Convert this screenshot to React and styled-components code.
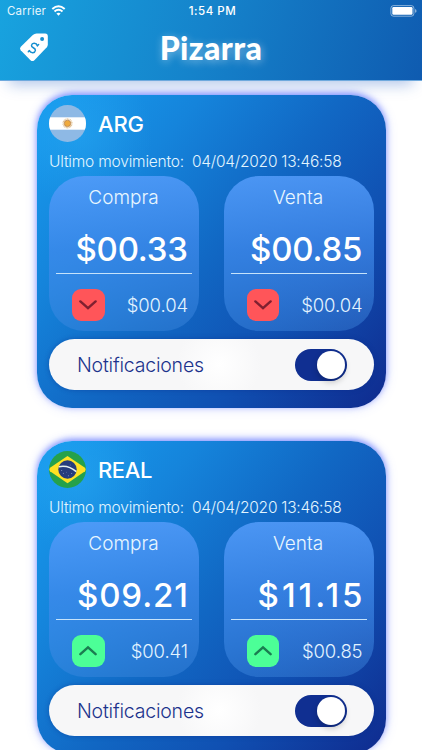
import styled, { createGlobalStyle } from "styled-components";
import { useState } from "react";

const GlobalStyle = createGlobalStyle`
    * {
        box-sizing: border-box;
    }

    body {
        margin: 0;
        background: white;
        font-family: "Inter", "Liberation Sans", sans-serif;
    }
`;

const Screen = styled.div`
    width: 422px;
    height: 750px;
    overflow: hidden;
    display: flex;
    flex-direction: column;
    background: white;
`;

const Header = styled.header`
    flex: none;
    height: 80px;
    display: flex;
    flex-direction: column;
    background: linear-gradient(108deg, #18a3df 0%, #1583cb 48%, #0f5bb0 100%);
    box-shadow: 0 1px 0 #6fa9dd, 0 13px 14px -9px rgba(25, 85, 190, 0.36);
    color: white;
`;

const StatusBar = styled.div`
    height: 21px;
    display: grid;
    grid-template-columns: 1fr auto 1fr;
    align-items: center;
    padding: 0 5px 0 7px;
`;

const Carrier = styled.div`
    display: flex;
    align-items: center;
    gap: 5px;
    font-size: 11.5px;
    letter-spacing: 0.2px;
    color: #e6f6fd;
`;

const Clock = styled.div`
    font-size: 11.5px;
    font-weight: 500;
    letter-spacing: 0.5px;
    padding: 1px 0 0 1px;
`;

const BatterySlot = styled.div`
    display: flex;
    justify-content: flex-end;
`;

const NavBar = styled.div`
    flex: 1;
    display: grid;
    grid-template-columns: 68px 1fr 68px;
    align-items: center;
    padding-bottom: 2px;
`;

const TagSlot = styled.div`
    display: flex;
    padding: 0 0 5px 19px;
`;

const PageTitle = styled.h1`
    margin: 0;
    padding-bottom: 3px;
    text-align: center;
    font-family: "Lato", sans-serif;
    font-size: 32px;
    line-height: 40px;
    font-weight: 900;
    letter-spacing: 0.4px;
    text-shadow: 1px 2px 8px rgba(255, 255, 255, 0.45);
`;

const List = styled.main`
    display: flex;
    flex-direction: column;
    gap: 33px;
    padding: 15px 36.5px 0 37px;
`;

const Card = styled.section`
    flex: none;
    height: 313px;
    padding: 10px 12px 18px;
    border-radius: 35px;
    background:
        radial-gradient(circle at 44px 40px, rgba(50, 180, 248, 0.32), rgba(50, 180, 248, 0) 72px),
        linear-gradient(130deg, #1799ec 5%, #1584db 27%, #1168c4 50%, #1050b2 72%, #0f2a8e 100%);
    box-shadow: 0 -2px 6px rgba(75, 100, 255, 0.65), 0 0 12px rgba(90, 110, 255, 0.25);
    color: white;
`;

const CardHead = styled.div`
    height: 37px;
    display: flex;
    align-items: center;
    gap: 12px;
`;

const Currency = styled.h2`
    margin: 0;
    font-size: 22px;
    line-height: 26px;
    font-weight: 500;
    letter-spacing: ${(props) => props.$spacing}px;
`;

const Movement = styled.div`
    height: 34px;
    padding-top: 4px;
    display: flex;
    align-items: center;
    gap: 8px;
    font-size: 15.5px;
    font-weight: 300;
    color: #e2f5ff;
    white-space: nowrap;
`;

const MovementLabel = styled.span`
    width: 135px;
    letter-spacing: -0.2px;
`;

const MovementDate = styled.span`
    letter-spacing: -0.24px;
`;

const Rates = styled.div`
    display: flex;
    justify-content: space-between;
`;

const RateBox = styled.div`
    width: 150px;
    height: 155px;
    padding: 8px 7px 0;
    border-radius: 35px;
    background: linear-gradient(176deg, rgba(84, 156, 250, 0.87) 0%, rgba(64, 138, 236, 0.75) 45%, rgba(64, 138, 222, 0.4) 100%);
`;

const RateName = styled.div`
    height: 28px;
    padding-right: 1px;
    line-height: 28px;
    text-align: center;
    font-size: 19px;
    font-weight: 300;
    color: #e9f7ff;
`;

const PriceRow = styled.div`
    height: 62px;
    padding: 17px 4px 0 0;
    border-bottom: 1px solid #c6e3fb;
    display: flex;
    justify-content: flex-end;
`;

// the negative margin drops the spacing after the last digit
const Price = styled.span`
    font-size: 33px;
    line-height: 41px;
    font-weight: 500;
    letter-spacing: ${(props) => props.$spacing}px;
    margin-right: ${(props) => -props.$spacing}px;
    white-space: nowrap;
`;

const ChangeRow = styled.div`
    height: 62px;
    display: flex;
    align-items: center;
    justify-content: space-between;
    padding: 0 4px 0 16px;
    font-size: 18.5px;
    font-weight: 300;
    letter-spacing: -0.1px;
    color: #e2f3ff;
`;

const TrendBadge = styled.div`
    width: 32.5px;
    height: 32.5px;
    border-radius: 9px;
    display: flex;
    align-items: center;
    justify-content: center;
    color: ${(props) => (props.$up ? "#1b7d50" : "#7f2030")};
    background: ${(props) => (props.$up ? "#4cff97" : "#ff5559")};
`;

const NotifyBar = styled.div`
    height: 51px;
    margin-top: 8px;
    padding: 0 27px 0 28px;
    display: flex;
    align-items: center;
    justify-content: space-between;
    border-radius: 26px;
    background: radial-gradient(circle at 170px 25px, #ffffff, #f7f7f8 42px);
    box-shadow: 0 0 5px rgba(10, 40, 130, 0.4);
    color: #1c338c;
    font-size: 19.5px;
    font-weight: 300;
    letter-spacing: -0.2px;
`;

const Toggle = styled.button`
    width: 52px;
    height: 32px;
    padding: 2px;
    border: none;
    border-radius: 16px;
    display: flex;
    align-items: center;
    justify-content: ${(props) => (props.$on ? "flex-end" : "flex-start")};
    background: ${(props) => (props.$on ? "#102f91" : "#c4c8d4")};
`;

const Knob = styled.span`
    width: 28px;
    height: 28px;
    border-radius: 50%;
    background: white;
    box-shadow: 0 3px 6px rgba(0, 0, 0, 0.22);
`;

const WifiIcon = () => (
  <svg width="15" height="11" viewBox="0 0 14 11" fill="none" stroke="white" strokeWidth="2">
    <path d="M0.8 4 Q7 -1.6 13.2 4" />
    <path d="M3 6.5 Q7 3 11 6.5" />
    <path d="M7 10.8 L4.9 8.5 Q7 6.9 9.1 8.5 Z" fill="white" stroke="none" />
  </svg>
);

const BatteryIcon = () => (
  <svg width="27" height="12" viewBox="0 0 27 12">
    <rect x="0.9" y="0.6" width="23" height="10.6" rx="2.6" fill="none" stroke="white" strokeOpacity="0.5" />
    <rect x="2.3" y="2" width="20.2" height="7.8" rx="1.2" fill="white" />
    <path d="M25 4 Q26.6 4.6 26.6 5.9 Q26.6 7.2 25 7.8 Z" fill="white" fillOpacity="0.5" />
  </svg>
);

const TagIcon = () => (
  <svg width="30" height="30" viewBox="0 0 30 30">
    <path
      d="M17.6 1.6 H26.2 Q28.8 1.6 28.8 4.2 V12.6 Q28.8 14.2 27.8 15.3 L15.4 28.2 Q13.4 30 11.5 28.2 L1.7 18.3 Q0.2 16.6 1.8 14.7 L13.8 3.1 Q15.4 1.6 17.6 1.6 Z"
      fill="white"
    />
    <circle cx="23.1" cy="7.1" r="2" fill="#168fd0" />
    <g fill="none" stroke="#168fd0" strokeWidth="1.5" strokeLinecap="round">
      <path d="M18.5 13.7 C17.3 10.7 13.1 10.6 12.5 13.3 C12 16 16.8 15.5 16.4 18.5 C16 21.1 12 21.6 10.3 18.6" />
      <path d="M19.6 12.5 L18.3 13.7 M10.4 18.7 L9.3 19.8" />
    </g>
  </svg>
);

const ArgentinaFlag = () => (
  <svg width="37" height="37" viewBox="0 0 37 37">
    <clipPath id="flag-ar">
      <circle cx="18.5" cy="18.5" r="18.5" />
    </clipPath>
    <g clipPath="url(#flag-ar)">
      <rect width="37" height="37" fill="#8eb9e5" />
      <rect y="12.3" width="37" height="12.4" fill="white" />
    </g>
    <circle cx="18.5" cy="18.4" r="4.4" fill="none" stroke="#e3c69b" strokeWidth="1.4" strokeDasharray="1 0.5" />
    <circle cx="18.5" cy="18.4" r="3.2" fill="#efaa3d" stroke="#b88451" strokeWidth="0.8" />
  </svg>
);

const BrazilFlag = () => (
  <svg width="37" height="37" viewBox="0 0 37 37">
    <circle cx="18.5" cy="18.5" r="18.5" fill="#25a14b" />
    <path d="M18.5 4.9 L36 16.7 Q37.4 18.5 36 20.2 L18.5 32.3 L1 20.2 Q-0.4 18.5 1 16.7 Z" fill="#ffe123" />
    <circle cx="18.5" cy="18.5" r="9.2" fill="#263d7d" />
    <path d="M9.8 15.7 Q19.5 13.8 27.3 20.7" fill="none" stroke="#e7f2ee" strokeWidth="1.6" />
    <g fill="#8fa2cb">
      <circle cx="12.7" cy="19.5" r="0.5" />
      <circle cx="14.4" cy="22.3" r="0.5" />
      <circle cx="17.5" cy="21.2" r="0.4" />
      <circle cx="19.4" cy="24.7" r="0.5" />
      <circle cx="22.7" cy="22.5" r="0.5" />
      <circle cx="21.2" cy="14" r="0.4" />
    </g>
  </svg>
);

const TrendIcon = ({ up }) => (
  <svg width="18" height="12" viewBox="0 0 18 12" fill="none" stroke="currentColor" strokeWidth="2.4">
    <path d={up ? "M1.4 9.2 L9 2.4 L16.6 9.2" : "M1.4 2.4 L9 9.2 L16.6 2.4"} strokeLinecap="round" />
  </svg>
);

const currencies = [
  {
    name: "ARG",
    spacing: -0.2,
    flag: <ArgentinaFlag />,
    up: false,
    rates: [
      { name: "Compra", price: "$00.33", change: "$00.04", spacing: -0.2 },
      { name: "Venta", price: "$00.85", change: "$00.04", spacing: -0.2 },
    ],
  },
  {
    name: "REAL",
    spacing: -0.4,
    flag: <BrazilFlag />,
    up: true,
    rates: [
      { name: "Compra", price: "$09.21", change: "$00.41", spacing: 0.9 },
      { name: "Venta", price: "$11.15", change: "$00.85", spacing: 3 },
    ],
  },
];

const Rate = ({ name, price, change, spacing, up }) => (
  <RateBox>
    <RateName>{name}</RateName>
    <PriceRow>
      <Price $spacing={spacing}>{price}</Price>
    </PriceRow>
    <ChangeRow>
      <TrendBadge $up={up}>
        <TrendIcon up={up} />
      </TrendBadge>
      <span>{change}</span>
    </ChangeRow>
  </RateBox>
);

const CurrencyCard = ({ name, spacing, flag, up, rates }) => {
  const [notify, setNotify] = useState(true);

  return (
    <Card>
      <CardHead>
        {flag}
        <Currency $spacing={spacing}>{name}</Currency>
      </CardHead>
      <Movement>
        <MovementLabel>Ultimo movimiento:</MovementLabel>
        <MovementDate>04/04/2020 13:46:58</MovementDate>
      </Movement>
      <Rates>
        {rates.map((rate) => (
          <Rate key={rate.name} up={up} {...rate} />
        ))}
      </Rates>
      <NotifyBar>
        <span>Notificaciones</span>
        <Toggle $on={notify} onClick={() => setNotify(!notify)} aria-label="Notificaciones">
          <Knob />
        </Toggle>
      </NotifyBar>
    </Card>
  );
};

const App = () => (
  <>
    <GlobalStyle />
    <Screen>
      <Header>
        <StatusBar>
          <Carrier>
            Carrier
            <WifiIcon />
          </Carrier>
          <Clock>1:54 PM</Clock>
          <BatterySlot>
            <BatteryIcon />
          </BatterySlot>
        </StatusBar>
        <NavBar>
          <TagSlot>
            <TagIcon />
          </TagSlot>
          <PageTitle>Pizarra</PageTitle>
        </NavBar>
      </Header>
      <List>
        {currencies.map((currency) => (
          <CurrencyCard key={currency.name} {...currency} />
        ))}
      </List>
    </Screen>
  </>
);

export default App;
